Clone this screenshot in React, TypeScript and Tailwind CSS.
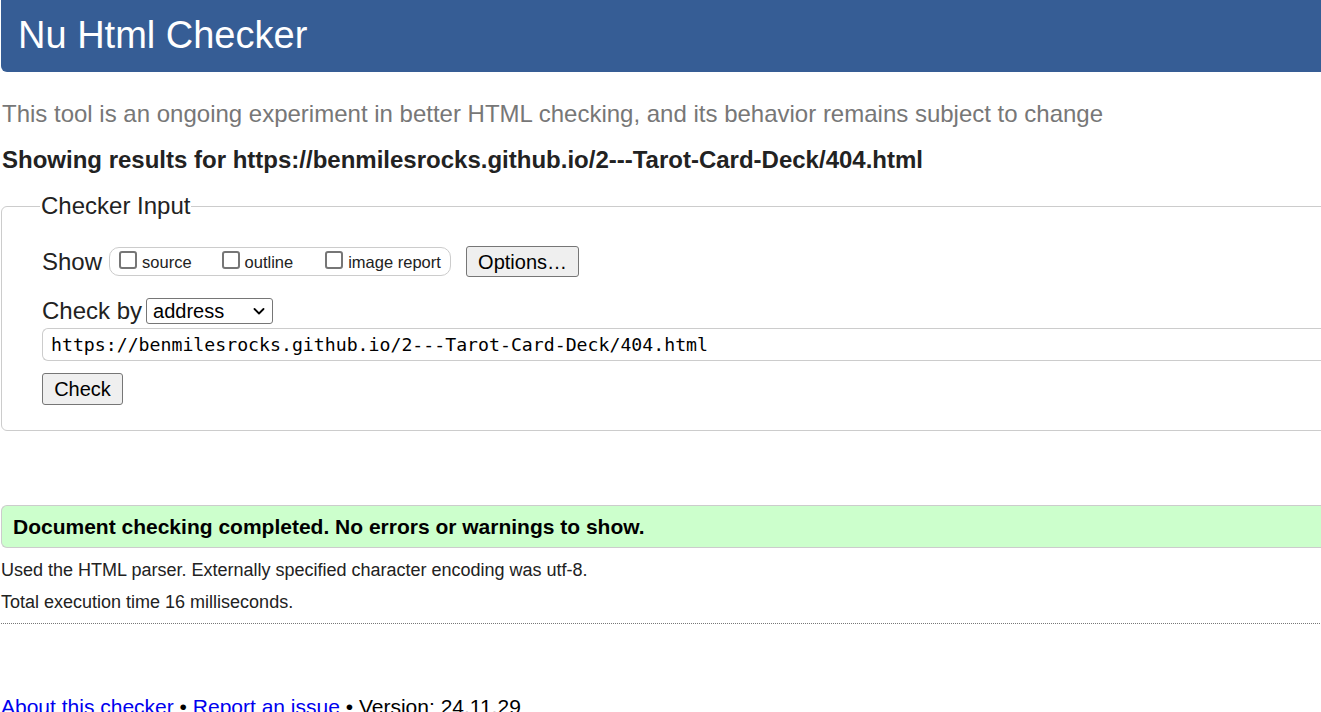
export default function App() {
  return (
    <div className="w-[1321px] h-[712px] overflow-hidden bg-white font-['Liberation_Sans',Arial,sans-serif] text-[#222]">
      <div className="w-[1400px]">
        {/* header bar */}
        <header className="ml-px h-[72px] rounded-b-md bg-[#365d95] pl-[17px] pt-[13px]">
          <h1 className="text-[38px] leading-[44px] text-white">Nu Html Checker</h1>
        </header>

        <p className="mt-[28px] pl-[2px] text-[24px] leading-[28px] text-[#777]">
          This tool is an ongoing experiment in better HTML checking, and its behavior remains subject to change
        </p>
        <p className="mt-[18px] pl-[2px] text-[24px] font-bold leading-[28px] text-[#222]">
          Showing results for https://benmilesrocks.github.io/2---Tarot-Card-Deck/404.html
        </p>

        {/* checker input */}
        <fieldset className="mt-[19px] ml-px h-[238px] rounded-md border border-[#ccc] px-[40px]">
          <legend className="-ml-[2px] px-px text-[24px] leading-[26px] text-[#222]">Checker Input</legend>

          <div className="mt-[27px] flex items-center">
            <span className="text-[24px] leading-[28px]">Show</span>
            <div className="ml-[7px] flex h-[29px] w-[342px] items-center rounded-[10px] border border-[#ccc] pl-[9px] text-[16.5px] text-[#222]">
              <label className="flex items-end">
                <span className="mb-[3px] h-[18px] w-[18px] rounded-[3px] border-2 border-[#767676] bg-white"></span>
                <span className="ml-[5px] leading-[20px]">source</span>
              </label>
              <label className="ml-[30px] flex items-end">
                <span className="mb-[3px] h-[18px] w-[18px] rounded-[3px] border-2 border-[#767676] bg-white"></span>
                <span className="ml-[5px] leading-[20px]">outline</span>
              </label>
              <label className="ml-[32px] flex items-end">
                <span className="mb-[3px] h-[18px] w-[18px] rounded-[3px] border-2 border-[#767676] bg-white"></span>
                <span className="ml-[5px] leading-[20px]">image report</span>
              </label>
            </div>
            <button className="ml-[15px] h-[31px] w-[113px] rounded-[3px] border border-[#767676] bg-[#efefef] text-[20px] leading-[28px] text-black">
              Options…
            </button>
          </div>

          <div className="mt-[20px] flex items-center">
            <span className="text-[24px] leading-[28px]">Check by</span>
            <div className="ml-[4px] flex h-[26px] w-[127px] items-center justify-between rounded-[3px] border border-[#767676] bg-white pl-[6px] pr-[6px] text-[20px] text-black">
              <span>address</span>
              <svg width="14" height="14" viewBox="0 0 14 14" fill="none">
                <path d="M2.5 5l4.5 4.5L11.5 5" stroke="#000" strokeWidth="1.8" strokeLinecap="round" strokeLinejoin="round" />
              </svg>
            </div>
          </div>

          <div className="mt-[3px] -mr-[40px] flex h-[33px] items-center rounded-l-md border border-r-0 border-[#ccc] pl-[8px] font-['DejaVu_Sans_Mono',monospace] text-[18.2px] text-black">
            https://benmilesrocks.github.io/2---Tarot-Card-Deck/404.html
          </div>

          <button className="mt-[12px] h-[32px] w-[81px] rounded-[3px] border border-[#767676] bg-[#efefef] text-[20px] leading-[28px] text-black">
            Check
          </button>
        </fieldset>

        {/* results */}
        <div className="mt-[74px] ml-px flex h-[43px] items-center rounded-l-md border border-r-0 border-[#ccc] bg-[#ccffcc] pl-[11px] text-[21px] font-bold text-black">
          Document checking completed. No errors or warnings to show.
        </div>
        <p className="mt-[12px] pl-px text-[18px] leading-[20px] text-[#222]">
          Used the HTML parser. Externally specified character encoding was utf-8.
        </p>
        <p className="mt-[12px] pl-px text-[18px] leading-[20px] text-[#222]">Total execution time 16 milliseconds.</p>
        <hr className="mt-[11px] ml-px border-t border-dotted border-[#777]" />

        <p className="mt-[71px] pl-px text-[21px] leading-[24px] text-black">
          <a href="#" className="text-[#0000ee] underline">About this checker</a>
          {" • "}
          <a href="#" className="text-[#0000ee] underline">Report an issue</a>
          {" • Version: 24.11.29"}
        </p>
      </div>
    </div>
  );
}
